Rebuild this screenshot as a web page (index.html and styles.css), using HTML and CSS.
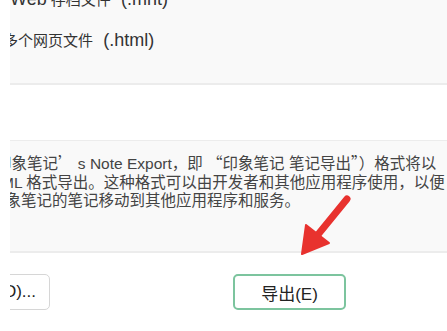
FILE: index.html
```html
<!DOCTYPE html>
<html lang="zh-CN">
<head>
    <meta charset="UTF-8">
    <title>导出笔记</title>
    <link rel="stylesheet" href="styles.css">
</head>
<body>
    <div class="dialog">
        <div class="formats">
            <div class="format first"><span class="lat">Web</span> 存档文件 <span class="lat ext">(.mht)</span></div>
            <div class="format second">多个网页文件 <span class="lat ext">(.html)</span></div>
        </div>

        <div class="desc">
            <div class="line l1">印象笔记<span class="fw">’</span> s Note Export<span class="fw">，</span>即 <span class="fw">“</span>印象笔记 笔记导出<span class="fw">”）</span>格式将以</div>
            <div class="line l2">ML 格式导出<span class="fw">。</span>这种格式可以由开发者和其他应用程序使用<span class="fw">，</span>以便</div>
            <div class="line l3">印象笔记的笔记移动到其他应用程序和服务<span class="fw">。</span></div>
        </div>

        <div class="actions">
            <button class="btn btn-options">(D)...</button>
            <button class="btn btn-export">导出(E)</button>
        </div>

        <svg class="arrow" viewBox="0 0 447 331" width="447" height="331">
            <defs>
                <filter id="soft"><feGaussianBlur stdDeviation="0.6"/></filter>
            </defs>
            <g filter="url(#soft)" fill="#e8312f" stroke="#e8312f">
                <line x1="347" y1="199" x2="316" y2="237" stroke-width="7" stroke-linecap="round"/>
                <polygon points="302,254 306,225 329,243" stroke-width="2" stroke-linejoin="round"/>
            </g>
        </svg>
    </div>
</body>
</html>
```

FILE: styles.css
```css
body {
    margin: 0;
    background-color: #fff;
    font-family: "Liberation Sans", "Noto Sans CJK SC", sans-serif;
    overflow: hidden;
}

.dialog {
    position: relative;
    margin-left: 10px;
    width: 437px;
    height: 331px;
    overflow: hidden;
}

.formats {
    height: 83px;
    background-color: #f9f9f9;
    border-bottom: 2px solid #ececec;
    overflow: hidden;
}

.format {
    font-size: 15px;
    line-height: 40px;
    color: #333;
    white-space: nowrap;
}

/* latin glyphs run larger than the CJK ones in the original UI font */
.format .lat {
    font-size: 18px;
}

.format .ext {
    margin-left: 6px;
}

.format.first {
    margin-top: -21px;
}

.format.second {
    margin-left: -7px;
}

.desc {
    margin-top: 55px;
    height: 113px;
    box-sizing: border-box;
    padding-top: 13px;
    background-color: #f9f9f9;
    border-top: 1px solid #ececec;
    border-bottom: 2px solid #ececec;
    overflow: hidden;
}

.line {
    font-size: 15.5px;
    line-height: 17.5px;
    color: #444;
    white-space: nowrap;
}

/* full-width CJK punctuation */
.fw {
    font-family: "Noto Sans CJK SC", sans-serif;
}

.l1 {
    margin-left: -14px;
}

.l2 {
    margin-left: -9px;
}

.l3 {
    margin-left: -20px;
}

.actions {
    display: flex;
    padding-top: 21px;
}

.btn {
    height: 36px;
    box-sizing: border-box;
    background-color: #fff;
    font-family: "Liberation Sans", "Noto Sans CJK SC", sans-serif;
    font-size: 17px;
    color: #222;
    border-radius: 5px;
    padding: 0;
}

.btn-options {
    width: 80px;
    margin-left: -40px;
    padding-right: 13px;
    text-align: right;
    border: 1px solid #d6d6d6;
}

.btn-export {
    width: 113px;
    margin-left: 183px;
    border: 2px solid #7cc49e;
}

.arrow {
    position: absolute;
    left: -10px;
    top: 0;
    pointer-events: none;
}
```
